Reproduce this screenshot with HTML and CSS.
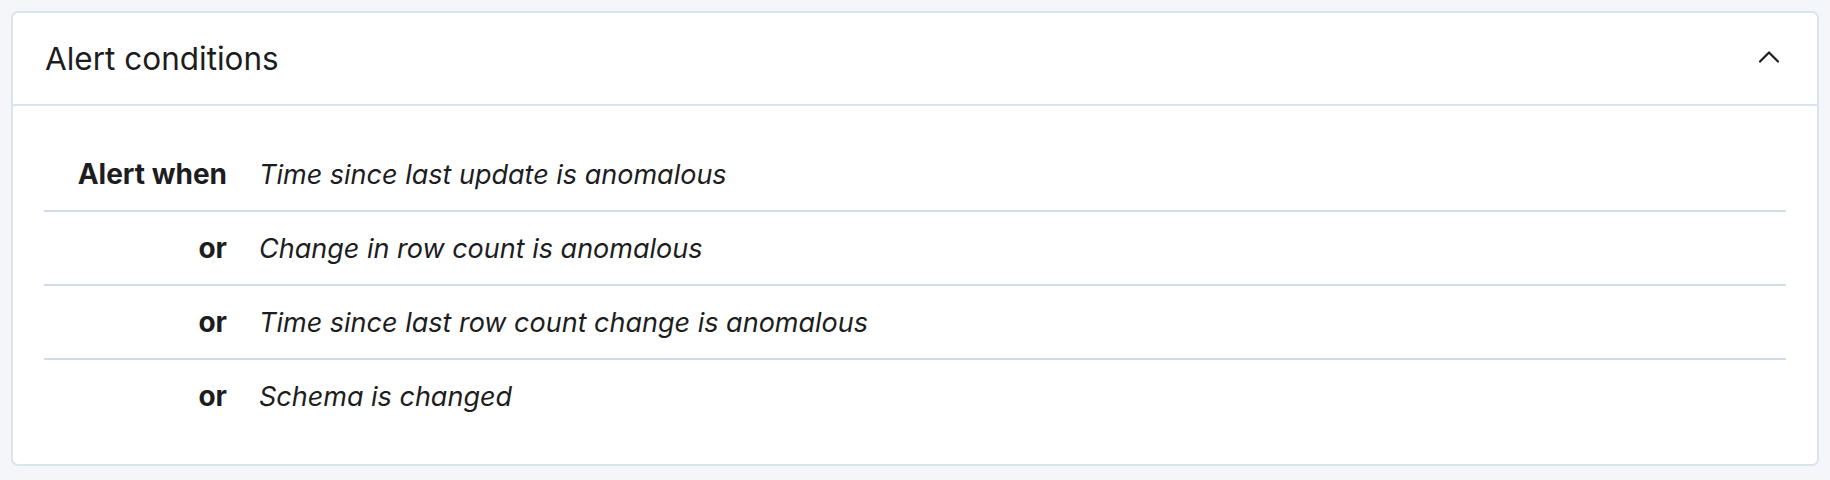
FILE: index.html
```html
<!DOCTYPE html>
<html lang="en">
<head>
    <meta charset="UTF-8">
    <meta name="viewport" content="width=device-width, initial-scale=1.0">
    <title>Alert conditions</title>
    <link rel="stylesheet" href="styles.css">
</head>
<body>

    <div class="panel">
        <div class="panel-header">
            <h2>Alert conditions</h2>
            <svg class="chevron" width="20" height="12" viewBox="0 0 20 12">
                <polyline points="1,10.5 10,1.5 19,10.5" fill="none" stroke="#1d1d1f" stroke-width="2.2" stroke-linecap="round" stroke-linejoin="round"/>
            </svg>
        </div>

        <div class="panel-body">
            <div class="condition">
                <span class="label">Alert when</span>
                <span class="value">Time since last update is anomalous</span>
            </div>
            <div class="condition">
                <span class="label">or</span>
                <span class="value">Change in row count is anomalous</span>
            </div>
            <div class="condition">
                <span class="label">or</span>
                <span class="value">Time since last row count change is anomalous</span>
            </div>
            <div class="condition">
                <span class="label">or</span>
                <span class="value">Schema is changed</span>
            </div>
        </div>
    </div>

</body>
</html>
```

FILE: styles.css
```css
body {
    font-family: Inter, "Noto Sans", sans-serif;
    background-color: #f4f6fa;
    color: #1d1d1f;
    margin: 0;
    padding: 11px;
}
.panel {
    background-color: #ffffff;
    border: 2px solid #dbe4ee;
    border-radius: 7px;
}
.panel-header {
    display: flex;
    align-items: center;
    justify-content: space-between;
    height: 91px;
    padding: 0 38px 0 32px;
    border-bottom: 2px solid #dbe4ee;
}
.panel-header h2 {
    margin: 0;
    font-size: 31.5px;
    font-weight: 400;
}
.chevron {
    margin-top: -4px;
}
.panel-body {
    padding: 32px 31px 32px;
}
.condition {
    display: flex;
    align-items: center;
    gap: 32px;
    height: 72px;
    border-bottom: 2px solid #d2dce6;
}
.condition:last-child {
    border-bottom: none;
}
.label {
    width: 183px;
    text-align: right;
    font-weight: 700;
    font-size: 28px;
}
.value {
    font-style: italic;
    font-size: 27px;
}
```
